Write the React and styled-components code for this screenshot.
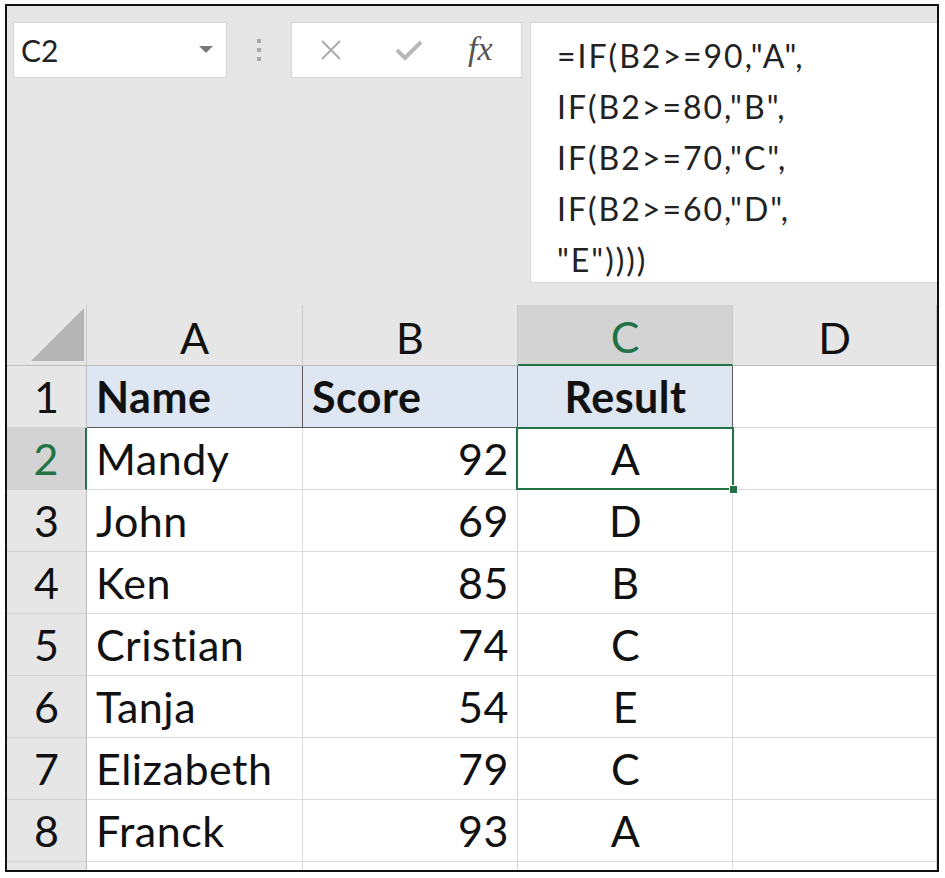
import React from 'react';
import styled, { createGlobalStyle, css } from 'styled-components';

const GREEN = '#217346';

const rows = [
  { name: 'Mandy', score: 92, result: 'A' },
  { name: 'John', score: 69, result: 'D' },
  { name: 'Ken', score: 85, result: 'B' },
  { name: 'Cristian', score: 74, result: 'C' },
  { name: 'Tanja', score: 54, result: 'E' },
  { name: 'Elizabeth', score: 79, result: 'C' },
  { name: 'Franck', score: 93, result: 'A' },
];

const formula = ['=IF(B2>=90,"A",', 'IF(B2>=80,"B",', 'IF(B2>=70,"C",', 'IF(B2>=60,"D",', '"E"))))'];

const App = () => (
  <>
    <GlobalStyle />
    <Frame>
      <Toolbar>
        <NameBox>
          <span>C2</span>
          <svg width="14" height="8" viewBox="0 0 14 8">
            <path d="M0 0 L14 0 L7 7 Z" fill="#7a7a7a" />
          </svg>
        </NameBox>
        <Grip>
          <i /><i /><i />
        </Grip>
        <ButtonBox>
          <svg width="22" height="22" viewBox="0 0 22 22">
            <path d="M2 2 L20 20 M20 2 L2 20" stroke="#a8a8a8" strokeWidth="1.8" />
          </svg>
          <svg width="28" height="22" viewBox="0 0 28 22">
            <path d="M2 11 L10 19 L26 3" stroke="#b8b8b8" strokeWidth="4" fill="none" />
          </svg>
          <Fx>fx</Fx>
        </ButtonBox>
        <FormulaBox>
          {formula.map(line => <div key={line}>{line}</div>)}
        </FormulaBox>
      </Toolbar>

      <Sheet>
        <Corner>
          <svg width="53" height="53" viewBox="0 0 53 53">
            <path d="M53 0 L53 53 L0 53 Z" fill="#b5b5b5" />
          </svg>
        </Corner>
        {['A', 'B', 'C', 'D'].map(col => (
          <ColHead key={col} $active={col === 'C'}>{col}</ColHead>
        ))}

        <RowHead>1</RowHead>
        <Cell $title>Name</Cell>
        <Cell $title>Score</Cell>
        <Cell $title $align="center">Result</Cell>
        <Cell />

        {rows.map(({ name, score, result }, idx) => (
          <React.Fragment key={name}>
            <RowHead $active={idx === 0}>{idx + 2}</RowHead>
            <Cell>{name}</Cell>
            <Cell $align="right">{score}</Cell>
            <Cell $align="center" $selected={idx === 0}>{result}</Cell>
            <Cell />
          </React.Fragment>
        ))}

        <RowHead />
        <Cell /><Cell /><Cell /><Cell />
      </Sheet>
    </Frame>
  </>
);

const GlobalStyle = createGlobalStyle`
  body {
    margin: 0;
    background: #fff;
    font-family: Lato, "Liberation Sans", sans-serif;
  }
`;

const Frame = styled.div`
  box-sizing: border-box;
  width: 934px;
  height: 868px;
  margin: 4px 0 0 5px;
  border: 2px solid #111;
  background: #e6e6e6;
  overflow: hidden;
  display: flex;
  flex-direction: column;
`;

const Toolbar = styled.div`
  box-sizing: border-box;
  height: 299px;
  flex-shrink: 0;
  display: flex;
  align-items: flex-start;
  padding: 16px 0 0 6px;
`;

const NameBox = styled.div`
  box-sizing: border-box;
  width: 214px;
  height: 56px;
  background: #fff;
  border: 1px solid #d6d6d6;
  display: flex;
  align-items: center;
  justify-content: space-between;
  padding: 0 13px 0 7px;
  font-size: 30px;
  color: #222;
`;

const Grip = styled.div`
  width: 64px;
  height: 56px;
  display: flex;
  flex-direction: column;
  align-items: center;
  justify-content: center;
  gap: 5px;
  & i {
    width: 4px;
    height: 4px;
    background: #a8a8a8;
  }
`;

const ButtonBox = styled.div`
  box-sizing: border-box;
  width: 231px;
  height: 56px;
  background: #fff;
  border: 1px solid #d6d6d6;
  display: flex;
  align-items: center;
  gap: 53px;
  padding: 0 0 0 28px;
  margin-right: 8px;
`;

const Fx = styled.span`
  font-family: "Liberation Serif", serif;
  font-style: italic;
  font-size: 34px;
  color: #555;
  margin: 0 0 2px -8px;
`;

const FormulaBox = styled.div`
  box-sizing: border-box;
  flex: 1;
  height: 261px;
  background: #fff;
  border: 1px solid #d6d6d6;
  border-right: none;
  padding: 7px 0 0 26px;
  font-size: 32px;
  line-height: 51px;
  letter-spacing: 2px;
  color: #222;
`;

const Sheet = styled.div`
  display: grid;
  grid-template-columns: 80px 216px 215px 215px 1fr;
  grid-template-rows: 61px;
  grid-auto-rows: 62px;
  font-size: 43px;
  color: #111;
`;

const Corner = styled.div`
  box-sizing: border-box;
  border-right: 1px solid #c8c8c8;
  border-bottom: 1px solid #bdbdbd;
  display: flex;
  align-items: flex-end;
  justify-content: flex-end;
  padding: 0 2px 4px 0;
`;

const ColHead = styled.div`
  box-sizing: border-box;
  display: flex;
  align-items: center;
  justify-content: center;
  padding-top: 4px;
  border-right: 1px solid #c8c8c8;
  border-bottom: 1px solid #bdbdbd;
  ${({ $active }) => $active && css`
    background: #d3d3d3;
    color: ${GREEN};
    border-bottom: 2px solid ${GREEN};
  `}
`;

const RowHead = styled.div`
  box-sizing: border-box;
  display: flex;
  align-items: center;
  justify-content: center;
  border-right: 1px solid #bdbdbd;
  border-bottom: 1px solid #d2d2d2;
  ${({ $active }) => $active && css`
    background: #d3d3d3;
    color: ${GREEN};
    border-right: 2px solid ${GREEN};
  `}
`;

const Cell = styled.div`
  position: relative;
  box-sizing: border-box;
  display: flex;
  align-items: center;
  background: #fff;
  border-right: 1px solid #dadada;
  border-bottom: 1px solid #dadada;
  padding: 0 8px 0 9px;
  letter-spacing: 0.5px;
  justify-content: ${({ $align }) => (
    $align === 'right' ? 'flex-end' :
    $align === 'center' ? 'center' :
    'flex-start'
  )};
  ${({ $title }) => $title && css`
    background: #dde6f1;
    font-weight: 700;
    border-right-color: #5a5a5a;
    border-bottom-color: #5a5a5a;
  `}
  ${({ $selected }) => $selected && css`
    &::after {
      content: "";
      position: absolute;
      top: -1px;
      left: -2px;
      right: -2px;
      bottom: -1px;
      border: 2px solid ${GREEN};
      z-index: 1;
    }
    &::before {
      content: "";
      position: absolute;
      right: -6px;
      bottom: -5px;
      width: 7px;
      height: 7px;
      background: ${GREEN};
      border: 1px solid #fff;
      z-index: 2;
    }
  `}
`;

export default App;
